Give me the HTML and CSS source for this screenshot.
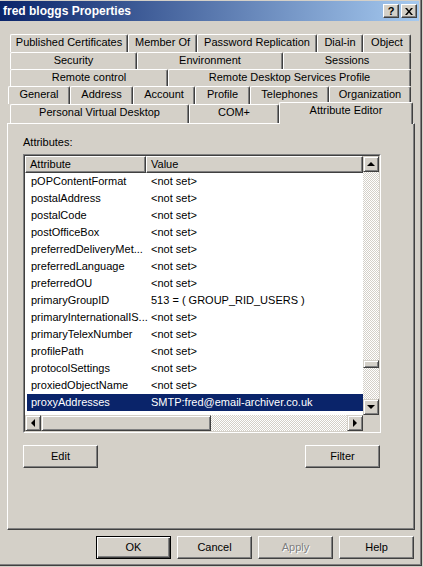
FILE: index.html
```html
<!DOCTYPE html>
<html lang="en">
<head>
    <meta charset="UTF-8">
    <title>fred bloggs Properties</title>
    <link rel="stylesheet" href="styles.css">
</head>
<body>
    <div class="window">
        <div class="titlebar">
            <span class="title">fred bloggs Properties</span>
            <div class="caption-btns">
                <div class="cap-btn">?</div>
                <div class="cap-btn">
                    <svg width="8" height="7" viewBox="0 0 8 7"><path d="M0 0h2l2 2.5L6 0h2L5 3.5 8 7H6L4 4.5 2 7H0l3-3.5z" fill="#000"/></svg>
                </div>
            </div>
        </div>

        <div class="content">
            <div class="tabs">
                <div class="tab-row r1">
                    <div class="tab">Published Certificates</div>
                    <div class="tab">Member Of</div>
                    <div class="tab">Password Replication</div>
                    <div class="tab">Dial-in</div>
                    <div class="tab">Object</div>
                </div>
                <div class="tab-row r2">
                    <div class="tab">Security</div>
                    <div class="tab">Environment</div>
                    <div class="tab">Sessions</div>
                </div>
                <div class="tab-row r3">
                    <div class="tab">Remote control</div>
                    <div class="tab">Remote Desktop Services Profile</div>
                </div>
                <div class="tab-row r4">
                    <div class="tab">General</div>
                    <div class="tab">Address</div>
                    <div class="tab">Account</div>
                    <div class="tab">Profile</div>
                    <div class="tab">Telephones</div>
                    <div class="tab">Organization</div>
                </div>
                <div class="tab-row r5">
                    <div class="tab">Personal Virtual Desktop</div>
                    <div class="tab">COM+</div>
                    <div class="tab active">Attribute Editor</div>
                </div>
            </div>

            <div class="panel">
                <div class="label">Attributes:</div>
                <div class="listbox">
                    <div class="listbox-inner">
                        <div class="list-area">
                            <div class="list-header">
                                <div class="head-cell">Attribute</div>
                                <div class="head-cell">Value</div>
                            </div>
                            <div class="list-rows">
                                <div class="row"><span>pOPContentFormat</span><span>&lt;not set&gt;</span></div>
                                <div class="row"><span>postalAddress</span><span>&lt;not set&gt;</span></div>
                                <div class="row"><span>postalCode</span><span>&lt;not set&gt;</span></div>
                                <div class="row"><span>postOfficeBox</span><span>&lt;not set&gt;</span></div>
                                <div class="row"><span>preferredDeliveryMet...</span><span>&lt;not set&gt;</span></div>
                                <div class="row"><span>preferredLanguage</span><span>&lt;not set&gt;</span></div>
                                <div class="row"><span>preferredOU</span><span>&lt;not set&gt;</span></div>
                                <div class="row"><span>primaryGroupID</span><span>513 = ( GROUP_RID_USERS )</span></div>
                                <div class="row"><span>primaryInternationalIS...</span><span>&lt;not set&gt;</span></div>
                                <div class="row"><span>primaryTelexNumber</span><span>&lt;not set&gt;</span></div>
                                <div class="row"><span>profilePath</span><span>&lt;not set&gt;</span></div>
                                <div class="row"><span>protocolSettings</span><span>&lt;not set&gt;</span></div>
                                <div class="row"><span>proxiedObjectName</span><span>&lt;not set&gt;</span></div>
                                <div class="row selected"><span>proxyAddresses</span><span>SMTP:fred@email-archiver.co.uk</span></div>
                                <div class="row"><span>publicDelegates</span><span>&lt;not set&gt;</span></div>
                            </div>
                        </div>

                        <div class="vscroll">
                            <div class="sb-btn"><i class="arrow up"></i></div>
                            <div class="sb-track v">
                                <div class="sb-thumb vthumb"></div>
                            </div>
                            <div class="sb-btn"><i class="arrow down"></i></div>
                        </div>

                        <div class="hscroll">
                            <div class="sb-btn"><i class="arrow left"></i></div>
                            <div class="sb-thumb hthumb"></div>
                            <div class="sb-track h"></div>
                            <div class="sb-btn"><i class="arrow right"></i></div>
                        </div>

                        <div class="corner"></div>
                    </div>
                </div>

                <div class="list-actions">
                    <div class="btn">Edit</div>
                    <div class="btn">Filter</div>
                </div>
            </div>

            <div class="footer">
                <div class="btn default">OK</div>
                <div class="btn">Cancel</div>
                <div class="btn disabled">Apply</div>
                <div class="btn">Help</div>
            </div>
        </div>
    </div>
</body>
</html>
```

FILE: styles.css
```css
* {
    margin: 0;
    padding: 0;
    box-sizing: border-box;
}

body {
    background: #d4d0c8;
    font-family: "Liberation Sans", Arial, sans-serif;
    font-size: 11px;
    color: #000;
}

.window {
    width: 422px;
    height: 566px;
    background: #d4d0c8;
    border-right: 1px solid #404040;
    border-bottom: 1px solid #404040;
    box-shadow: inset -1px -1px 0 #808080;
    display: flex;
    flex-direction: column;
}

/* title bar */
.titlebar {
    height: 20px;
    margin: 1px 2px 0 0;
    background: linear-gradient(90deg, #0a246a, #a6caf0);
    display: flex;
    align-items: center;
    justify-content: space-between;
    padding: 0 2px 0 3px;
}

.title {
    color: #fff;
    font-weight: bold;
    font-size: 12px;
}

.caption-btns {
    display: flex;
    gap: 2px;
}

.cap-btn {
    width: 16px;
    height: 14px;
    background: #d4d0c8;
    border: 1px solid;
    border-color: #fff #404040 #404040 #fff;
    box-shadow: inset -1px -1px 0 #808080;
    display: flex;
    align-items: center;
    justify-content: center;
    font-weight: bold;
    font-size: 11px;
    line-height: 12px;
}

.content {
    padding: 13px 6px 0 7px;
}

/* tabs */
.tab-row {
    display: grid;
    padding-left: 3px;
}

.r1 { height: 18px; grid-template-columns: 118px 69px 120px 46px 48px; }
.r2 { height: 17px; grid-template-columns: 127px 146px 128px; }
.r3 { height: 17px; grid-template-columns: 158px 243px; }
.r4 { height: 18px; grid-template-columns: 62px 63px 62px 55px 79px 82px; padding-left: 1px; }
.r5 { height: 19px; grid-template-columns: 179px 90px 134px; }

.tab {
    border-top: 1px solid #fff;
    border-left: 1px solid #fff;
    border-right: 1px solid #404040;
    box-shadow: inset -1px 0 0 #808080;
    border-top-left-radius: 2px;
    border-top-right-radius: 2px;
    text-align: center;
    line-height: 14px;
    white-space: nowrap;
    overflow: hidden;
    background: #d4d0c8;
}

.tab.active {
    position: relative;
    margin-top: -2px;
    margin-bottom: -1px;
    line-height: 15px;
    z-index: 1;
}

/* panel */
.panel {
    height: 407px;
    border: 1px solid;
    border-color: #fff #404040 #404040 #fff;
    box-shadow: inset -1px -1px 0 #808080;
    padding: 12px 0 0 15px;
}

.label {
    line-height: 13px;
    margin-bottom: 5px;
}

.listbox {
    width: 358px;
    height: 279px;
    border: 1px solid;
    border-color: #808080 #fff #fff #808080;
}

.listbox-inner {
    height: 100%;
    border: 1px solid;
    border-color: #404040 #d4d0c8 #d4d0c8 #404040;
    display: grid;
    grid-template-columns: 338px 16px;
    grid-template-rows: 259px 16px;
    background: #fff;
}

.list-area {
    overflow: hidden;
}

.list-header {
    display: grid;
    grid-template-columns: 121px 1fr;
    height: 17px;
}

.head-cell {
    background: #d4d0c8;
    border: 1px solid;
    border-color: #fff #404040 #404040 #fff;
    box-shadow: inset -1px -1px 0 #808080;
    padding-left: 4px;
    line-height: 14px;
}

.row {
    display: grid;
    grid-template-columns: 119px 1fr;
    height: 17px;
    line-height: 17px;
    margin-left: 2px;
    white-space: nowrap;
}

.row span:first-child {
    padding-left: 4px;
}

.row span:last-child {
    padding-left: 5px;
}

.row.selected {
    background: #0a246a;
    color: #fff;
}

/* scrollbars */
.vscroll {
    display: flex;
    flex-direction: column;
}

.hscroll {
    display: flex;
}

.sb-btn {
    width: 16px;
    height: 16px;
    flex: none;
    background: #d4d0c8;
    border: 1px solid;
    border-color: #d4d0c8 #404040 #404040 #d4d0c8;
    box-shadow: inset 1px 1px 0 #fff, inset -1px -1px 0 #808080;
    display: flex;
    align-items: center;
    justify-content: center;
}

.sb-track {
    flex: 1;
    background: repeating-conic-gradient(#d4d0c8 0 25%, #fff 0 50%) 0 0 / 2px 2px;
}

.sb-thumb {
    background: #d4d0c8;
    border: 1px solid;
    border-color: #d4d0c8 #404040 #404040 #d4d0c8;
    box-shadow: inset 1px 1px 0 #fff, inset -1px -1px 0 #808080;
}

.vthumb {
    height: 8px;
    margin-top: 188px;
}

.hthumb {
    width: 170px;
    flex: none;
}

.corner {
    background: #d4d0c8;
}

.arrow {
    width: 0;
    height: 0;
    border: 4px solid transparent;
}

.arrow.up { border-bottom-color: #000; border-top-width: 0; }
.arrow.down { border-top-color: #000; border-bottom-width: 0; }
.arrow.left { border-right-color: #000; border-left-width: 0; }
.arrow.right { border-left-color: #000; border-right-width: 0; }

/* buttons */
.list-actions {
    display: flex;
    justify-content: space-between;
    width: 357px;
    margin-top: 12px;
}

.btn {
    width: 75px;
    height: 23px;
    background: #d4d0c8;
    border: 1px solid;
    border-color: #fff #404040 #404040 #fff;
    box-shadow: inset -1px -1px 0 #808080;
    text-align: center;
    line-height: 20px;
}

.btn.default {
    border-color: #000;
    box-shadow: inset 1px 1px 0 #fff, inset -1px -1px 0 #404040, inset -2px -2px 0 #808080;
}

.btn.disabled {
    color: #808080;
    text-shadow: 1px 1px 0 #fff;
}

.footer {
    display: flex;
    justify-content: flex-end;
    gap: 6px;
    padding-top: 6px;
    padding-right: 1px;
}
```
